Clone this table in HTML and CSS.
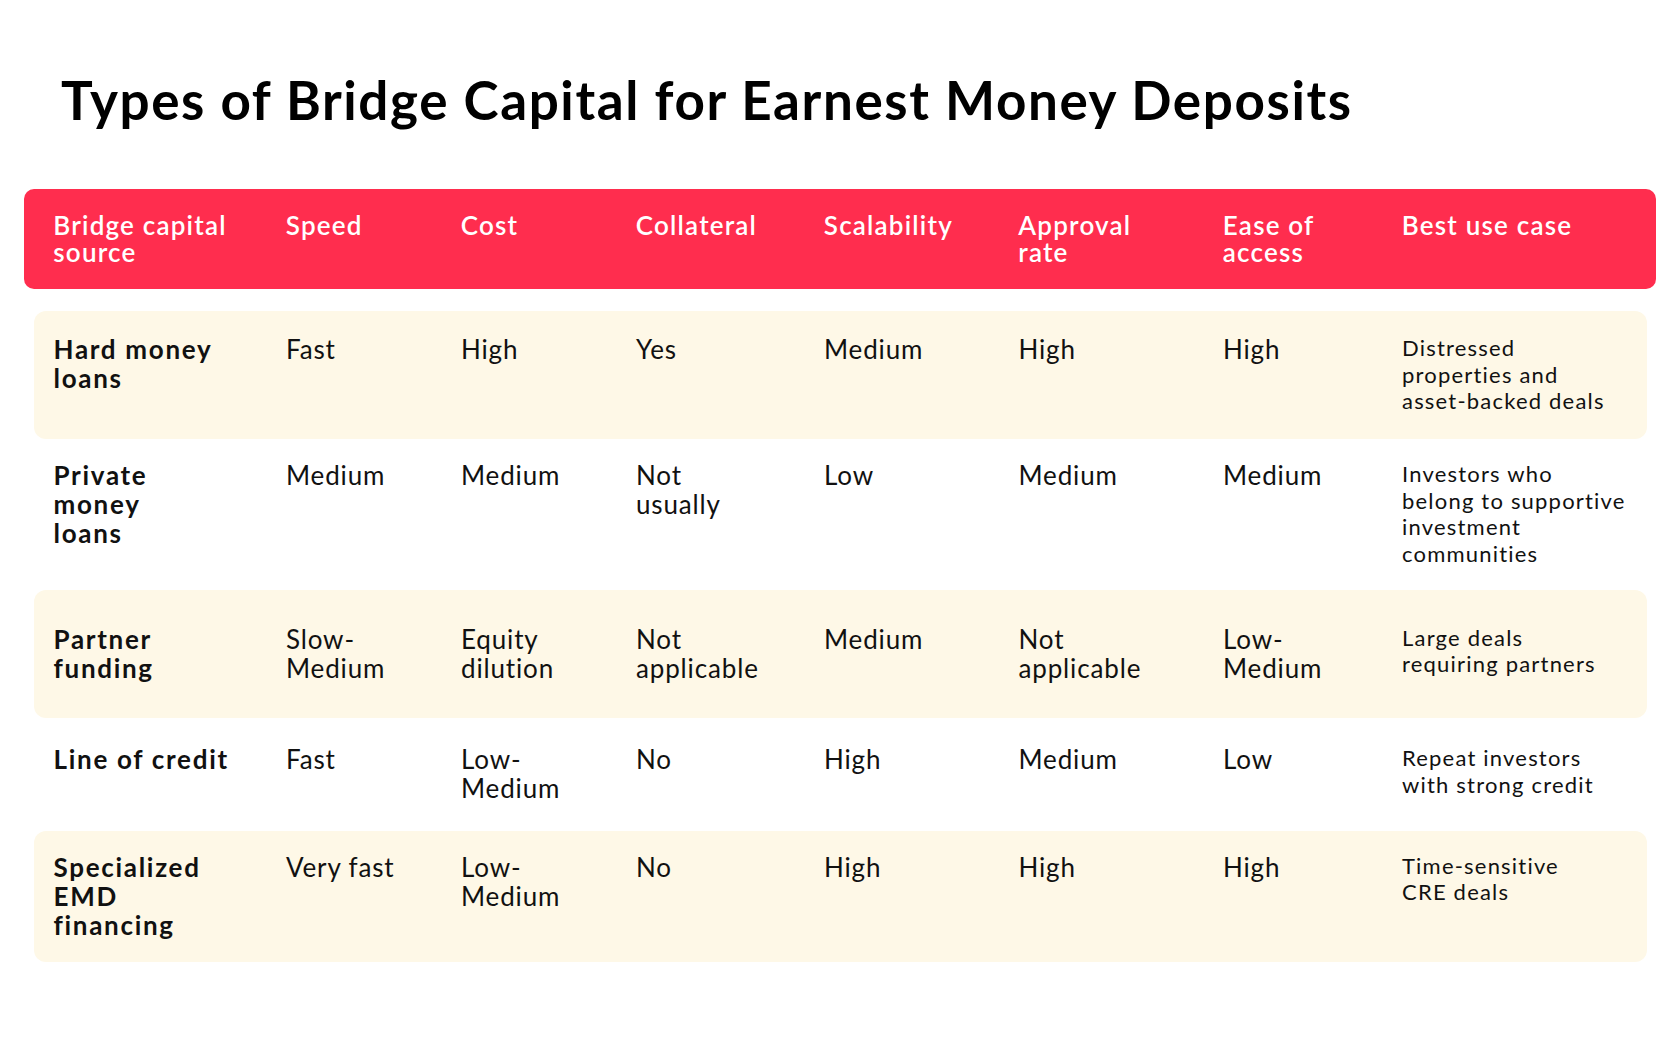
FILE: index.html
```html
<!DOCTYPE html>
<html lang="en">
<head>
<meta charset="utf-8">
<title>Types of Bridge Capital for Earnest Money Deposits</title>
<link rel="stylesheet" href="styles.css">
</head>
<body>
<main class="page">
  <h1 class="title">Types of Bridge Capital for Earnest Money Deposits</h1>
  <section class="table">
    <div class="head">
      <div class="hcell">Bridge capital<br>source</div>
      <div class="hcell">Speed</div>
      <div class="hcell">Cost</div>
      <div class="hcell">Collateral</div>
      <div class="hcell">Scalability</div>
      <div class="hcell">Approval<br>rate</div>
      <div class="hcell">Ease of<br>access</div>
      <div class="hcell">Best use case</div>
    </div>

    <div class="row alt">
      <div class="cell name">Hard money<br>loans</div>
      <div class="cell">Fast</div>
      <div class="cell">High</div>
      <div class="cell">Yes</div>
      <div class="cell">Medium</div>
      <div class="cell">High</div>
      <div class="cell">High</div>
      <div class="cell use">Distressed<br>properties and<br>asset-backed deals</div>
    </div>

    <div class="row">
      <div class="cell name">Private<br>money<br>loans</div>
      <div class="cell">Medium</div>
      <div class="cell">Medium</div>
      <div class="cell">Not<br>usually</div>
      <div class="cell">Low</div>
      <div class="cell">Medium</div>
      <div class="cell">Medium</div>
      <div class="cell use">Investors who<br>belong to supportive<br>investment<br>communities</div>
    </div>

    <div class="row alt">
      <div class="cell name">Partner<br>funding</div>
      <div class="cell">Slow-<br>Medium</div>
      <div class="cell">Equity<br>dilution</div>
      <div class="cell">Not<br>applicable</div>
      <div class="cell">Medium</div>
      <div class="cell">Not<br>applicable</div>
      <div class="cell">Low-<br>Medium</div>
      <div class="cell use">Large deals<br>requiring partners</div>
    </div>

    <div class="row">
      <div class="cell name">Line of credit</div>
      <div class="cell">Fast</div>
      <div class="cell">Low-<br>Medium</div>
      <div class="cell">No</div>
      <div class="cell">High</div>
      <div class="cell">Medium</div>
      <div class="cell">Low</div>
      <div class="cell use">Repeat investors<br>with strong credit</div>
    </div>

    <div class="row alt">
      <div class="cell name">Specialized<br>EMD<br>financing</div>
      <div class="cell">Very fast</div>
      <div class="cell">Low-<br>Medium</div>
      <div class="cell">No</div>
      <div class="cell">High</div>
      <div class="cell">High</div>
      <div class="cell">High</div>
      <div class="cell use">Time-sensitive<br>CRE deals</div>
    </div>
  </section>
</main>
</body>
</html>
```

FILE: styles.css
```css
* {
  box-sizing: border-box;
}

html, body {
  margin: 0;
  padding: 0;
  background: #ffffff;
}

body {
  font-family: Lato, "Noto Sans", "Open Sans", sans-serif;
  color: #111111;
}

.page {
  padding: 69px 24px 40px;
}

.title {
  margin: 0 0 58px 37px;
  font-size: 53px;
  line-height: 62px;
  font-weight: 700;
  letter-spacing: 1.6px;
  color: #000000;
}

.table {
  display: flex;
  flex-direction: column;
}

.head,
.row {
  display: grid;
  grid-template-columns: 232.5px 175px 175px 188px 194.5px 204.5px 179px 1fr;
  align-content: center;
  align-items: start;
}

.head {
  background: #ff2d4e;
  border-radius: 10px;
  padding: 23px 29.3px;
  min-height: 100px;
  margin-bottom: 22px;
}

.hcell {
  color: #ffffff;
  font-size: 26px;
  line-height: 27px;
  font-weight: 600;
  letter-spacing: 1.2px;
}

.row {
  margin: 0 9.5px;
  padding: 22px 20px;
  min-height: 113px;
  border-radius: 12px;
}

.row.alt {
  background: #fef8e7;
  min-height: 128px;
}

.cell {
  font-size: 26px;
  line-height: 29px;
  font-weight: 400;
  letter-spacing: 0.85px;
  color: #111111;
}

.cell.name {
  font-weight: 700;
  letter-spacing: 1.7px;
}

.cell.use {
  font-size: 22px;
  line-height: 26.67px;
  letter-spacing: 1.2px;
}
```
